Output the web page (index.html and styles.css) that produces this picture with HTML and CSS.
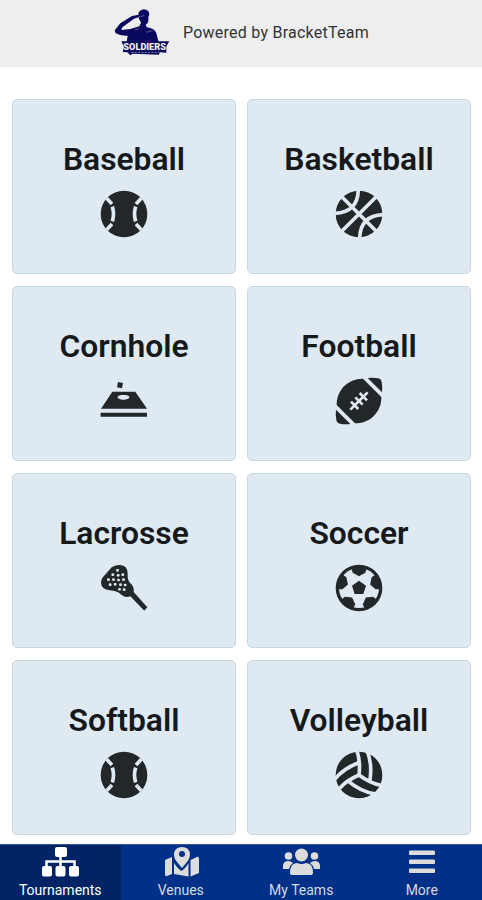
FILE: index.html
```html
<!DOCTYPE html>
<html lang="en">
<head>
    <meta charset="UTF-8">
    <meta name="viewport" content="width=device-width, initial-scale=1.0">
    <title>BracketTeam</title>
    <link rel="stylesheet" href="styles.css">
</head>
<body>
    <header class="header">
        <svg class="logo" viewBox="0 0 216 180">
            <path d="M100 39 Q99 25 116 22 Q133 23 133 38 L130 45 Q133 61 122 69 L126 76 Q147 79 153 91 L161 120 H65 L68 101 Q48 103 32 94 L29 85 L46 64 L81 42 L101 38 L104 44 L87 50 L52 76 L49 84 L76 81 L103 73 L108 62 L102 50 Z"/>
            <path d="M101 44 L118 41 M90 84 L103 79 M124 91 L143 86" class="logo-line"/>
            <path d="M49 118 H193 L184 133 L184 152 L166 151 L161 158 L83 155 L76 160 L67 151 L53 150 L57 134 Z"/>
            <text x="55" y="145" textLength="128" lengthAdjust="spacingAndGlyphs">SOLDIERS</text>
            <path d="M79 151 H164" class="logo-dash"/>
        </svg>
        <span class="powered">Powered by BracketTeam</span>
    </header>

    <main class="sports">
        <a class="card">
            <h2>Baseball</h2>
            <svg class="icon" viewBox="0 0 144 144">
                <circle cx="72" cy="72" r="70"/>
                <path class="gap" d="M20 25 L36 42 M124 25 L108 42 M20 119 L36 102 M124 119 L108 102 M37 50 Q44 72 37 94 M107 50 Q100 72 107 94"/>
            </svg>
        </a>
        <a class="card">
            <h2>Basketball</h2>
            <svg class="icon" viewBox="0 0 144 144">
                <circle cx="72" cy="72" r="70"/>
                <path class="gap" d="M18 18 L126 126 M126 18 L18 126 M70 0 Q68 67 0 70 M74 144 Q76 77 144 74"/>
            </svg>
        </a>
        <a class="card">
            <h2>Cornhole</h2>
            <svg class="icon" viewBox="0 0 144 144">
                <path fill-rule="evenodd" d="M37 44 H106 L141 95 H3 Z M53 60 C53 71 88 71 88 60 C88 52 53 52 53 60 Z"/>
                <path d="M2 107 H141 V119 H2 Z M54 15 L69 18 L66 34 L51 31 Z"/>
            </svg>
        </a>
        <a class="card">
            <h2>Football</h2>
            <svg class="icon" viewBox="0 0 144 144">
                <path d="M84 5 L139 60 C140 105 104 140 60 139 L5 84 C4 39 40 4 84 5 Z"/>
                <path d="M98 3 Q115 1 129 4 Q139 6 140 15 Q143 30 141 46 Z M3 98 Q1 115 4 129 Q6 139 15 140 Q30 143 46 141 Z"/>
                <path class="gap lace" d="M46 98 L98 46 M48 74 L70 96 M61 61 L83 83 M74 48 L96 70"/>
            </svg>
        </a>
        <a class="card">
            <h2>Lacrosse</h2>
            <svg class="icon" viewBox="0 0 144 144">
                <path d="M35 10 Q57 -3 73 7 Q83 13 83 30 Q82 49 91 58 Q103 68 101 84 L142 130 L133 140 L91 97 Q77 103 64 92 Q51 80 29 79 Q5 77 3 58 Q3 43 14 34 Z"/>
                <path class="net" d="M52 19 h1 M38 32 h1 M54 34 h1 M68 32 h1 M25 47 h1 M40 47 h1 M55 48 h1 M70 47 h1 M30 62 h1 M45 61 h1 M61 62 h1 M75 63 h1 M58 76 h1 M72 77 h1"/>
            </svg>
        </a>
        <a class="card">
            <h2>Soccer</h2>
            <svg class="icon" viewBox="0 0 144 144">
                <circle cx="72" cy="72" r="70"/>
                <circle class="white" cx="72" cy="72" r="60"/>
                <path d="M72 50 L93 65 L85 90 H59 L51 65 Z"/>
                <path id="patch" d="M48 8 L53 26 L72 37 L91 26 L96 8 Z"/>
                <use href="#patch" transform="rotate(72 72 72)"/>
                <use href="#patch" transform="rotate(144 72 72)"/>
                <use href="#patch" transform="rotate(216 72 72)"/>
                <use href="#patch" transform="rotate(288 72 72)"/>
            </svg>
        </a>
        <a class="card">
            <h2>Softball</h2>
            <svg class="icon" viewBox="0 0 144 144">
                <circle cx="72" cy="72" r="70"/>
                <path class="gap" d="M20 25 L36 42 M124 25 L108 42 M20 119 L36 102 M124 119 L108 102 M37 50 Q44 72 37 94 M107 50 Q100 72 107 94"/>
            </svg>
        </a>
        <a class="card">
            <h2>Volleyball</h2>
            <svg class="icon" viewBox="0 0 144 144">
                <circle cx="72" cy="72" r="70"/>
                <g class="gap">
                    <path id="seam" d="M72 72 Q77 32 66 0 M104 92 Q113 42 97 2"/>
                    <use href="#seam" transform="rotate(120 72 72)"/>
                    <use href="#seam" transform="rotate(240 72 72)"/>
                </g>
            </svg>
        </a>
    </main>

    <nav class="tabs">
        <a class="tab active">
            <svg viewBox="0 0 40 32">
                <rect x="15" y="1" width="12" height="10" rx="2"/>
                <rect x="2" y="20" width="10" height="10.500" rx="2"/>
                <rect x="15.500" y="20" width="10" height="10.500" rx="2"/>
                <rect x="29" y="20" width="10" height="10.500" rx="2"/>
                <path class="wire" d="M20.500 10 V22 M6.500 21 V15.500 H34.500 V21"/>
            </svg>
            <span>Tournaments</span>
        </a>
        <a class="tab">
            <svg viewBox="0 0 40 32">
                <path d="M4 14 L11 11 V28 L6 30 Q4 31 4 28 Z M13 17 Q17 23 20.500 25 Q24 23 27.500 17 V30.500 L13 28 Z M29.500 14 L36 11 Q38 10 38 13 V27 L29.500 30.500 Z"/>
                <path fill-rule="evenodd" d="M21 1 C12 1 11 10 16 16 L21 22 L26 16 C31 10 30 1 21 1 Z M21 5 A3 3 0 1 1 21 11 A3 3 0 1 1 21 5 Z"/>
            </svg>
            <span>Venues</span>
        </a>
        <a class="tab">
            <svg viewBox="0 0 40 32">
                <circle cx="20.500" cy="9" r="6.500"/>
                <circle cx="7.500" cy="10" r="3.800"/>
                <circle cx="33.500" cy="10" r="3.800"/>
                <path d="M9 27 Q9 17 16 17 Q20.500 19 25 17 Q32 17 32 27 Q32 29 29 29 H12 Q9 29 9 27 Z M2 23 V19 Q3 15 7 15 Q10 15 12 17 Q9 19 8 23 Z M39 23 V19 Q38 15 34 15 Q31 15 29 17 Q32 19 33 23 Z"/>
            </svg>
            <span>My Teams</span>
        </a>
        <a class="tab">
            <svg viewBox="0 0 40 32">
                <rect x="7" y="4.500" width="26" height="4.500" rx="1"/>
                <rect x="7" y="13.500" width="26" height="4.500" rx="1"/>
                <rect x="7" y="22.500" width="26" height="4.500" rx="1"/>
            </svg>
            <span>More</span>
        </a>
    </nav>
</body>
</html>
```
FILE: styles.css
```css
body {
    font-family: Roboto, "Liberation Sans", sans-serif;
    background-color: #fff;
    margin: 0;
    height: 900px;
    display: flex;
    flex-direction: column;
    overflow: hidden;
}
.header {
    height: 67px;
    padding: 0 0 0 105px;
    background-color: #eee;
    display: flex;
    box-sizing: border-box;
}
.logo {
    width: 72px;
    height: 60px;
    margin-top: 2px;
    fill: #09085c;
}
.logo text {
    font-size: 25px;
    font-weight: 900;
    fill: #eee;
}
.logo-line {
    fill: none;
    stroke: #55558d;
    stroke-width: 3;
}
.logo-dash {
    stroke: #8888ac;
    stroke-width: 3;
    stroke-dasharray: 6 4;
}
.powered {
    margin-left: 6px;
    line-height: 65px;
    font-size: 16px;
    letter-spacing: 0.24px;
    color: #333;
    white-space: nowrap;
}
.sports {
    display: grid;
    grid-template-columns: 224px 224px;
    grid-auto-rows: 175px;
    gap: 12px 11px;
    padding: 32px 0 0 12px;
    flex: 1;
}
.card {
    box-sizing: border-box;
    border: 1px solid #c9d9e2;
    border-radius: 5px;
    background-color: #dfe9f2;
    display: flex;
    flex-direction: column;
    align-items: center;
    padding-top: 41px;
}
.card h2 {
    margin: 0;
    font-size: 31.8px;
    line-height: 37px;
    font-weight: 600;
    color: #16191c;
}
.icon {
    width: 48px;
    height: 48px;
    margin-top: 12px;
    fill: #222729;
}
.gap {
    fill: none;
    stroke: #dfe9f2;
    stroke-width: 11;
}
.lace {
    stroke-width: 8;
}
.net {
    stroke: #dfe9f2;
    stroke-width: 8;
    stroke-linecap: round;
}
.white {
    fill: #dfe9f2;
}
.tabs {
    height: 56px;
    box-sizing: border-box;
    border-top: 1px solid #37508f;
    background-color: #003087;
    display: flex;
}
.tab {
    flex: 1;
    display: flex;
    flex-direction: column;
    align-items: center;
    color: #d5d9e2;
    fill: #dcdcdc;
    font-size: 14px;
}
.tab svg {
    width: 40px;
    height: 32px;
    margin-top: 1px;
}
.tab span {
    line-height: 18px;
    margin-top: 3px;
}
.active {
    background-color: #002466;
    color: #fff;
    fill: #fff;
}
.wire {
    fill: none;
    stroke: #fff;
    stroke-width: 2.5;
}
```
